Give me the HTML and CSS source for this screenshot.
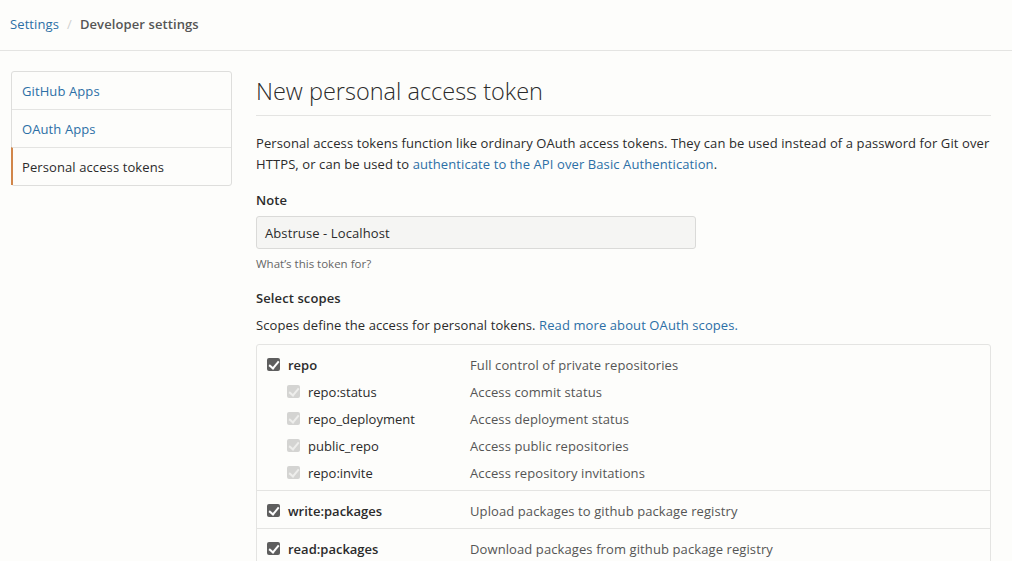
FILE: index.html
```html
<!DOCTYPE html>
<html>
<head>
<meta charset="utf-8">
<link rel="stylesheet" href="styles.css">
</head>
<body>
<header class="topbar">
  <nav class="crumbs">
    <a class="crumb-link" href="#">Settings</a>
    <span class="crumb-sep">/</span>
    <span class="crumb-current">Developer settings</span>
  </nav>
</header>
<div class="layout">
  <aside class="sidebar">
    <a class="side-item" href="#">GitHub Apps</a>
    <a class="side-item" href="#">OAuth Apps</a>
    <a class="side-item selected" href="#">Personal access tokens</a>
  </aside>
  <main class="content">
    <h1 class="title">New personal access token</h1>
    <p class="intro">Personal access tokens function like ordinary OAuth access tokens. They can be used instead of a password for Git over HTTPS, or can be used to <a href="#" class="link">authenticate to the API over Basic Authentication</a>.</p>
    <label class="field-label">Note</label>
    <div class="input">Abstruse - Localhost</div>
    <p class="hint">What’s this token for?</p>
    <h3 class="field-label scopes-title">Select scopes</h3>
    <p class="scopes-desc">Scopes define the access for personal tokens. <a href="#" class="link">Read more about OAuth scopes.</a></p>
    <div class="scopes">
      <div class="group">
        <div class="row">
          <div class="name"><span class="cb"></span><span class="label strong">repo</span></div>
          <div class="desc">Full control of private repositories</div>
        </div>
        <div class="row sub">
          <div class="name"><span class="cb dis"></span><span class="label">repo:status</span></div>
          <div class="desc">Access commit status</div>
        </div>
        <div class="row sub">
          <div class="name"><span class="cb dis"></span><span class="label">repo_deployment</span></div>
          <div class="desc">Access deployment status</div>
        </div>
        <div class="row sub">
          <div class="name"><span class="cb dis"></span><span class="label">public_repo</span></div>
          <div class="desc">Access public repositories</div>
        </div>
        <div class="row sub">
          <div class="name"><span class="cb dis"></span><span class="label">repo:invite</span></div>
          <div class="desc">Access repository invitations</div>
        </div>
      </div>
      <div class="group">
        <div class="row">
          <div class="name"><span class="cb"></span><span class="label strong">write:packages</span></div>
          <div class="desc">Upload packages to github package registry</div>
        </div>
      </div>
      <div class="group">
        <div class="row">
          <div class="name"><span class="cb"></span><span class="label strong">read:packages</span></div>
          <div class="desc">Download packages from github package registry</div>
        </div>
      </div>
    </div>
  </main>
</div>
</body>
</html>
```
FILE: styles.css
```css
* { box-sizing: border-box; }
html, body { margin: 0; padding: 0; }
body {
  background: #fdfdfb;
  font-family: "Open Sans", "Noto Sans", sans-serif;
  font-size: 13px;
  letter-spacing: 0.1px;
  color: #2b2b2b;
  overflow: hidden;
  height: 561px;
}
a { text-decoration: none; }
.topbar {
  height: 51px;
  border-bottom: 1px solid #e4e4e2;
  display: flex;
  align-items: center;
  padding: 0 10px 3px;
}
.crumbs { font-size: 13px; display: flex; align-items: center; }
.crumb-link { color: #2c6fa6; }
.crumb-sep { color: #d0d0d0; margin: 0 8px; }
.crumb-current { color: #555; font-weight: 600; }

.layout {
  display: flex;
  padding: 20px 0 0 11px;
  gap: 24px;
}
.sidebar {
  width: 221px;
  flex: none;
  align-self: flex-start;
  border: 1px solid #dededc;
  border-radius: 3px;
  display: flex;
  flex-direction: column;
}
.side-item {
  height: 38px;
  display: flex;
  align-items: center;
  padding-left: 10px;
  color: #2c6fa6;
  border-top: 1px solid #e4e4e2;
}
.side-item:first-child { border-top: none; height: 37px; }
.side-item.selected {
  color: #2b2b2b;
  border-left: 2px solid #d1864a;
  margin-left: -1px;
  padding-left: 9px;
}
.content { width: 735px; flex: none; }
.title {
  font-size: 23.5px;
  font-weight: 300;
  margin: 0;
  padding: 5px 0 9px;
  color: #2b2b2b;
  border-bottom: 1px solid #e4e4e2;
  line-height: 30px;
  letter-spacing: 0;
}
.intro {
  margin: 17px 0 0;
  line-height: 21px;
}
.link { color: #2c6fa6; }
.field-label {
  display: block;
  font-weight: 600;
  margin: 15px 0 6px;
  font-size: 13px;
  line-height: 20px;
}
.input {
  width: 440px;
  height: 33px;
  border: 1px solid #dadad8;
  border-radius: 3px;
  background: #f5f5f3;
  padding: 0 8px;
  display: flex;
  align-items: center;
}
.hint {
  font-size: 11.5px;
  color: #666;
  margin: 7px 0 0;
  line-height: 16px;
  letter-spacing: 0;
}
.scopes-title { margin: 16px 0 0; }
.scopes-desc { margin: 7px 0 0; line-height: 21px; }
.scopes {
  margin-top: 8px;
  border: 1px solid #e4e4e2;
  border-radius: 3px;
}
.group {
  padding: 6px 0 4px 10px;
  border-top: 1px solid #e4e4e2;
}
.group:first-child { border-top: none; }
.row {
  display: flex;
  align-items: center;
  height: 27px;
}
.name {
  width: 203px;
  display: flex;
  align-items: center;
}
.row.sub .name { padding-left: 20px; }
.cb {
  width: 13px;
  height: 13px;
  border-radius: 2px;
  background: #5e5e5e;
  margin-right: 8px;
  position: relative;
  flex: none;
}
.cb::after {
  content: "";
  position: absolute;
  left: 4px;
  top: 1px;
  width: 4px;
  height: 8px;
  border: solid #fff;
  border-width: 0 2px 2px 0;
  transform: rotate(40deg);
}
.cb.dis { background: #d4d4d2; }
.cb.dis::after { border-color: #eeeeec; }
.label { color: #2b2b2b; letter-spacing: 0; }
.label.strong { font-weight: 600; }
.desc { color: #555; }
```
